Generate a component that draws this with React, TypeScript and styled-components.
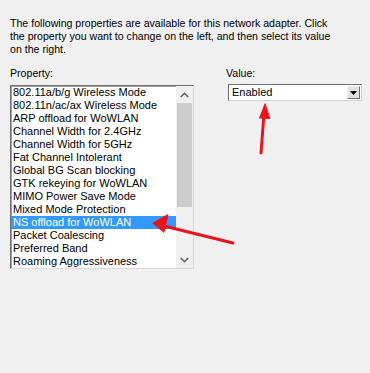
import React from 'react';
import styled, { createGlobalStyle } from 'styled-components';

const GlobalStyle = createGlobalStyle`
  html, body {
    margin: 0;
    padding: 0;
    background: #f0f0f0;
  }
  body {
    font-family: 'Liberation Sans', Arial, sans-serif;
    font-size: 11px;
    color: #000;
  }
`;

const Page = styled.div`
  position: relative;
  width: 370px;
  height: 373px;
  padding: 17px 10px 0 10px;
  box-sizing: border-box;
  overflow: hidden;
`;

const Description = styled.p`
  margin: 0;
  width: 350px;
  line-height: 13px;
  font-size: 10.6px;
  white-space: nowrap;
`;

const Columns = styled.div`
  display: grid;
  grid-template-columns: 184px 136px;
  column-gap: 32px;
  margin-top: 11px;
`;

const Column = styled.div`
  display: flex;
  flex-direction: column;
`;

const Label = styled.div<{ $gap: number }>`
  line-height: 13px;
  font-size: 10.6px;
  height: 13px;
  margin-bottom: ${({ $gap }) => $gap}px;
`;

const ListBox = styled.div`
  display: flex;
  width: 184px;
  height: 184px;
  box-sizing: border-box;
  border: 1px solid;
  border-color: #6f6f6f #d9d9d9 #d9d9d9 #6f6f6f;
  box-shadow: inset 1px 1px 0 #a0a0a0;
  background: #fff;
`;

const Items = styled.ul`
  list-style: none;
  margin: 0;
  padding: 0;
  flex: 1;
`;

const Item = styled.li<{ $selected?: boolean }>`
  height: 13px;
  line-height: 13px;
  padding-left: 2px;
  white-space: nowrap;
  background: ${({ $selected }) => ($selected ? '#3399ff' : 'transparent')};
  color: ${({ $selected }) => ($selected ? '#fff' : '#000')};
`;

const ScrollBar = styled.div`
  width: 17px;
  display: flex;
  flex-direction: column;
  background: #f0f0f0;
`;

const ScrollButton = styled.div`
  height: 17px;
  display: flex;
  align-items: center;
  justify-content: center;
`;

const Thumb = styled.div`
  height: 104px;
  margin: 0 1px;
  background: #cdcdcd;
`;

const Track = styled.div`
  flex: 1;
`;

const Combo = styled.div`
  display: flex;
  align-items: center;
  margin-left: 2px;
  width: 134px;
  height: 17px;
  box-sizing: border-box;
  border: 1px solid;
  border-color: #6f6f6f #d4d4d4 #d4d4d4 #6f6f6f;
  background: #fff;
  padding: 1px;
`;

const ComboText = styled.span`
  flex: 1;
  padding-left: 2px;
  line-height: 13px;
`;

const ComboButton = styled.div`
  width: 13px;
  height: 13px;
  box-sizing: border-box;
  border: 1px solid;
  border-color: #f4f4f4 #6d6d6d #6d6d6d #f4f4f4;
  background: #e1e1e1;
  display: flex;
  align-items: center;
  justify-content: center;
`;

const Overlay = styled.svg`
  position: absolute;
  left: 0;
  top: 0;
  pointer-events: none;
`;

const properties = [
  '802.11a/b/g Wireless Mode',
  '802.11n/ac/ax Wireless Mode',
  'ARP offload for WoWLAN',
  'Channel Width for 2.4GHz',
  'Channel Width for 5GHz',
  'Fat Channel Intolerant',
  'Global BG Scan blocking',
  'GTK rekeying for WoWLAN',
  'MIMO Power Save Mode',
  'Mixed Mode Protection',
  'NS offload for WoWLAN',
  'Packet Coalescing',
  'Preferred Band',
  'Roaming Aggressiveness',
];

export default function App() {
  const selected = 'NS offload for WoWLAN';

  return (
    <Page>
      <GlobalStyle />
      <Description>
        The following properties are available for this network adapter. Click
        <br />
        the property you want to change on the left, and then select its value
        <br />
        on the right.
      </Description>
      <Columns>
        <Column>
          <Label $gap={5}>Property:</Label>
          <ListBox>
            <Items>
              {properties.map((p) => (
                <Item key={p} $selected={p === selected}>
                  {p}
                </Item>
              ))}
            </Items>
            <ScrollBar>
              <ScrollButton>
                <svg width="9" height="6" viewBox="0 0 9 6">
                  <path d="M0.8 5 L4.5 1.3 L8.2 5" fill="none" stroke="#606060" strokeWidth="1.6" />
                </svg>
              </ScrollButton>
              <Thumb />
              <Track />
              <ScrollButton>
                <svg width="9" height="6" viewBox="0 0 9 6">
                  <path d="M0.8 1 L4.5 4.7 L8.2 1" fill="none" stroke="#606060" strokeWidth="1.6" />
                </svg>
              </ScrollButton>
            </ScrollBar>
          </ListBox>
        </Column>
        <Column>
          <Label $gap={4}>Value:</Label>
          <Combo>
            <ComboText>Enabled</ComboText>
            <ComboButton>
              <svg width="7" height="4" viewBox="0 0 7 4">
                <path d="M0 0 H7 L3.5 4 Z" fill="#000" />
              </svg>
            </ComboButton>
          </Combo>
        </Column>
      </Columns>
      <Overlay width="370" height="373" viewBox="0 0 370 373">
        <g fill="#e8141b" stroke="#e8141b" strokeLinecap="round" strokeLinejoin="round">
          <line x1="261" y1="153" x2="264" y2="114" strokeWidth="3" />
          <polygon points="265,104 259.5,118 269.5,118.5" strokeWidth="1" />
          <line x1="233" y1="243" x2="164" y2="226" strokeWidth="3" />
          <polygon points="153,223 168,214.5 164,232" strokeWidth="1" />
        </g>
      </Overlay>
    </Page>
  );
}
